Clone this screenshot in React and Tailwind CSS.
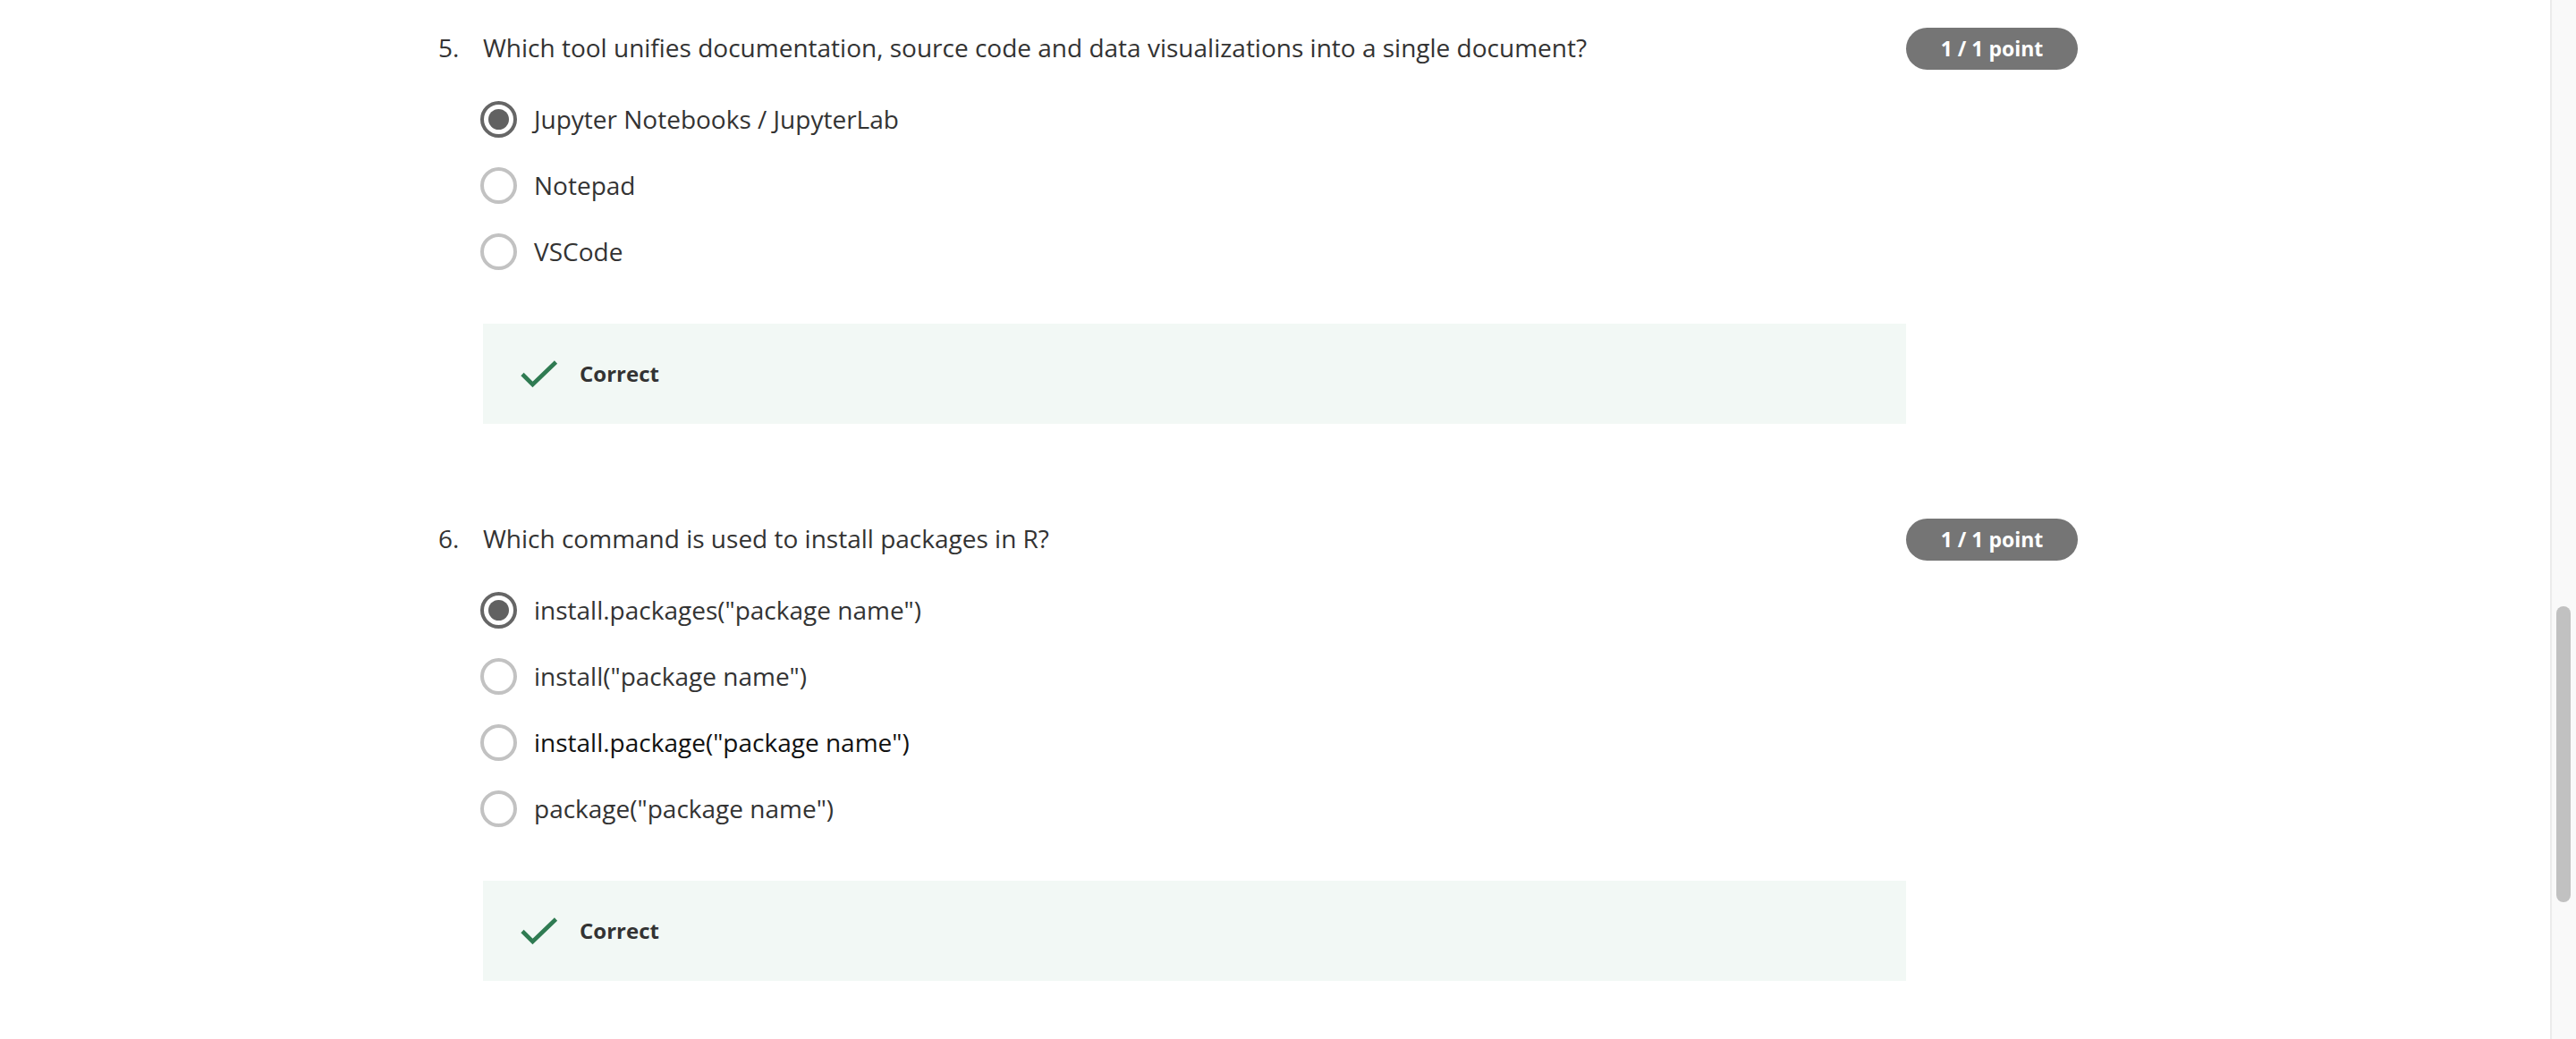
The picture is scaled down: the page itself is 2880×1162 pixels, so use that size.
import React from 'react';

// Preguntas del cuestionario ya calificado
const preguntas = [
  {
    num: 5,
    texto: 'Which tool unifies documentation, source code and data visualizations into a single document?',
    opciones: ['Jupyter Notebooks / JupyterLab', 'Notepad', 'VSCode'],
    elegida: 0,
  },
  {
    num: 6,
    texto: 'Which command is used to install packages in R?',
    opciones: [
      'install.packages("package name")',
      'install("package name")',
      'install.package("package name")',
      'package("package name")',
    ],
    elegida: 0,
    hover: 2,
  },
];

function Radio({ marcada }) {
  return marcada ? (
    <span className="w-[41px] h-[41px] rounded-full border-[4.5px] border-[#666666] flex items-center justify-center shrink-0">
      <span className="w-[23px] h-[23px] rounded-full bg-[#616161]" />
    </span>
  ) : (
    <span className="w-[41px] h-[41px] rounded-full border-[4px] border-[#c2c2c2] shrink-0" />
  );
}

function Correcto() {
  return (
    <div className="mt-[44px] h-[112px] bg-[#f2f8f5] flex items-center pl-[42px]">
      <svg width="42" height="32" viewBox="0 0 42 32" fill="none" className="shrink-0">
        <path d="M2 16.5 L13.5 28 L39.5 3" stroke="#2f7b52" strokeWidth="4.6" />
      </svg>
      <span className="ml-[24px] text-[24px] font-bold text-[#333333]">Correct</span>
    </div>
  );
}

function Pregunta({ p }) {
  return (
    <div className="flex items-start">
      <div className="w-[50px] shrink-0 mt-[2px] leading-[42px] text-[28px] text-[#333333]">{p.num}.</div>
      <div className="w-[1591px] shrink-0">
        <p className="mt-[2px] leading-[42px] text-[28px] text-[#333333]">{p.texto}</p>
        <div className="mt-[22px] flex flex-col">
          {p.opciones.map((op, i) => (
            <div key={op} className="h-[74px] flex items-center -ml-[3px]">
              <Radio marcada={i === p.elegida} />
              <span className={`ml-[19px] text-[28px] ${i === p.hover ? 'text-[#111111]' : 'text-[#333333]'}`}>
                {op}
              </span>
            </div>
          ))}
        </div>
        <Correcto />
      </div>
      <span className="w-[192px] h-[47px] mt-[1px] shrink-0 rounded-full bg-[#757575] text-white text-[23px] font-bold flex items-center justify-center">
        1 / 1 point
      </span>
    </div>
  );
}

export default function App() {
  return (
    <div className="flex h-[1162px] overflow-hidden bg-white" style={{ fontFamily: '"Open Sans", "Noto Sans", sans-serif' }}>
      <div className="flex-1 pl-[490px] pt-[30px] flex flex-col gap-[105px]">
        {preguntas.map(p => <Pregunta key={p.num} p={p} />)}
      </div>

      {/* Barra de scroll */}
      <div className="w-[29px] shrink-0 bg-[#f9f9f9] border-l-2 border-[#ebebeb] pl-[5px] pt-[678px]">
        <div className="w-[16px] h-[331px] rounded-full bg-[#c1c1c1]" />
      </div>
    </div>
  );
}
